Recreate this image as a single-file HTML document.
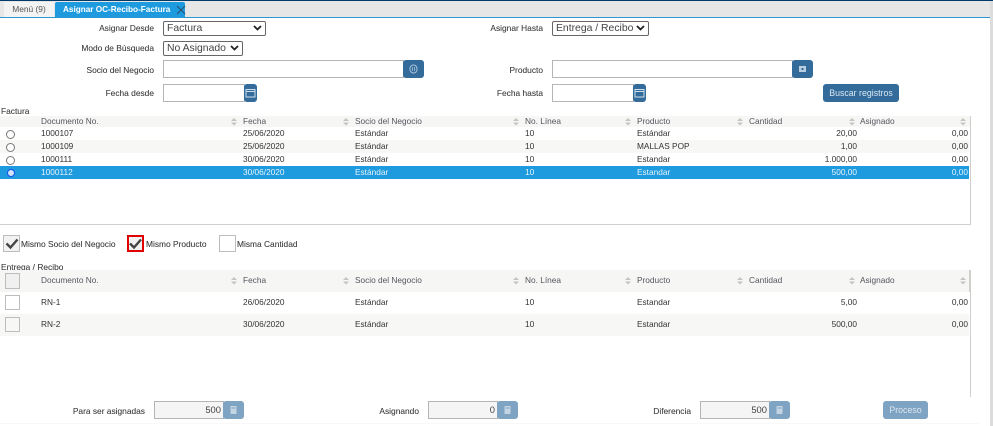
<!DOCTYPE html>
<html lang="es"><head><meta charset="utf-8"><title>Asignar OC-Recibo-Factura</title>
<style>
html,body{margin:0;padding:0;background:#fff}
body{width:993px;height:426px;position:relative;overflow:hidden;font-family:"Liberation Sans",sans-serif;color:#333}
div,span{position:absolute;box-sizing:border-box;white-space:nowrap}
svg{position:absolute;display:block}
.l{font-size:8.4px;line-height:12px;height:12px;text-align:right;color:#444;text-shadow:0 0 .3px #777}
.t{font-size:8.3px;line-height:12px;height:12px;color:#333}
.h{color:#55555f}
.r{text-align:right}
.w{color:#e6f3fb}
.sel{border:1px solid #666;border-radius:2px;background:#fff;font-size:10.4px;line-height:13px;padding-left:3px;color:#444}
.inp{border:1px solid #b5b5b5;background:#fff}
.btn{background:#336b9b;border-radius:3px}
.ro{background:#f5f5f5;border:1px solid #b5b5b5;font-size:9.4px;line-height:16px;text-align:right;padding-right:2px;color:#444}
.bl{background:#7fa3c2;border-radius:3px}
.cb{border:1px solid #bdbdbd;background:#fff}
.radio{width:9px;height:9px;border:1px solid #777;border-radius:50%;background:#fff;left:6px}
</style></head><body>

<div style="left:0;top:0;width:993px;height:1px;background:#003a66"></div>
<div style="left:0;top:1px;width:990px;height:16px;background:#e6e6e6"></div>
<div style="left:0;top:17px;width:990px;height:1px;background:#2d97d2"></div>
<div style="left:990px;top:1px;width:3px;height:425px;background:#dcdcdc"></div>

<div style="left:4px;top:2px;width:50px;height:15px;background:#f3f3f3;font-size:8.4px;line-height:15px;text-align:center;color:#555">Menú (9)</div>
<div style="left:55px;top:2px;width:130px;height:15px;background:#1e9bde;border-radius:2px 2px 0 0;font-size:8.2px;line-height:15px;padding-left:8px;color:#fff;font-weight:bold">Asignar OC-Recibo-Factura</div>
<svg style="left:176px;top:5px" width="10" height="10" viewBox="0 0 10 10"><path d="M1 1L9 9M9 1L1 9" stroke="#2b4f6c" stroke-width="1" fill="none"/></svg>

<div class="l" style="left:40px;top:22px;width:114px">Asignar Desde</div>
<div class="sel" style="left:163px;top:21px;width:103px;height:15px">Factura<svg style="left:89px;top:3px" width="9" height="6" viewBox="0 0 9 6"><path d="M1 1L4.5 4.5L8 1" stroke="#222" stroke-width="1.8" fill="none"/></svg></div>
<div class="l" style="left:40px;top:42px;width:114px">Modo de Búsqueda</div>
<div class="sel" style="left:163px;top:41px;width:80px;height:15px">No Asignado<svg style="left:66px;top:3px" width="9" height="6" viewBox="0 0 9 6"><path d="M1 1L4.5 4.5L8 1" stroke="#222" stroke-width="1.8" fill="none"/></svg></div>
<div class="l" style="left:40px;top:64px;width:114px">Socio del Negocio</div>
<div class="inp" style="left:163px;top:60px;width:241px;height:18px"></div>
<div class="btn" style="left:403px;top:60px;width:21px;height:18px"><svg style="left:6px;top:4px" width="9" height="10" viewBox="0 0 9 10"><rect x="1" y="1" width="7" height="8" rx="3.5" fill="none" stroke="#a9c3d8"/><path d="M3.500 3v4M5.500 3v4" stroke="#a9c3d8" stroke-width=".8"/></svg></div>
<div class="l" style="left:40px;top:87px;width:114px">Fecha desde</div>
<div class="inp" style="left:163px;top:84px;width:82px;height:18px"></div>
<div class="btn" style="left:244px;top:84px;width:13px;height:18px"><svg style="left:1px;top:4px" width="11" height="10" viewBox="0 0 11 10"><rect x="1" y="1.500" width="9" height="7.500" fill="none" stroke="#cfe0ec"/><path d="M1 3.500h9" stroke="#cfe0ec"/></svg></div>

<div class="l" style="left:440px;top:22px;width:103px">Asignar Hasta</div>
<div class="sel" style="left:552px;top:21px;width:97px;height:15px">Entrega / Recibo<svg style="left:83px;top:3px" width="9" height="6" viewBox="0 0 9 6"><path d="M1 1L4.5 4.5L8 1" stroke="#222" stroke-width="1.8" fill="none"/></svg></div>
<div class="l" style="left:440px;top:64px;width:103px">Producto</div>
<div class="inp" style="left:552px;top:60px;width:241px;height:18px"></div>
<div class="btn" style="left:792px;top:60px;width:21px;height:18px"><svg style="left:6px;top:4px" width="9" height="10" viewBox="0 0 9 10"><rect x="1" y="2" width="7" height="6" fill="#b9cfe0"/><rect x="3.500" y="4" width="2" height="2" fill="#336b9b"/></svg></div>
<div class="l" style="left:440px;top:87px;width:103px">Fecha hasta</div>
<div class="inp" style="left:552px;top:84px;width:82px;height:18px"></div>
<div class="btn" style="left:633px;top:84px;width:13px;height:18px"><svg style="left:1px;top:4px" width="11" height="10" viewBox="0 0 11 10"><rect x="1" y="1.500" width="9" height="7.500" fill="none" stroke="#cfe0ec"/><path d="M1 3.500h9" stroke="#cfe0ec"/></svg></div>
<div style="left:823px;top:84px;width:76px;height:18px;background:#336b9b;border-radius:3px;color:#dbe9f3;font-size:8.8px;line-height:18px;text-align:center">Buscar registros</div>

<!-- Tabla Factura -->
<div class="l" style="left:1px;top:105px;text-align:left">Factura</div>
<div style="left:0;top:116px;width:970px;height:11px;background:#f6f6f5"></div>
<div style="left:0;top:140px;width:969px;height:13px;background:#f7f7f5"></div>
<div style="left:0;top:166px;width:969px;height:13px;background:#1e9bde"></div>
<div style="left:970px;top:116px;width:1px;height:109px;background:#cfcfcb"></div>
<div style="left:0;top:224px;width:971px;height:1px;background:#cfcfcb"></div>

<span class="t h" style="left:41px;top:115px">Documento No.</span><span class="t h" style="left:243px;top:115px">Fecha</span><span class="t h" style="left:355px;top:115px">Socio del Negocio</span><span class="t h" style="left:525px;top:115px">No. Línea</span><span class="t h" style="left:637px;top:115px">Producto</span><span class="t h" style="left:749px;top:115px">Cantidad</span><span class="t h" style="left:860px;top:115px">Asignado</span>
<svg style="left:0;top:116px" width="970" height="11"><g fill="#c4c4c0"><path d="M231 5l3-3 3 3zM231 6.500l3 3 3-3zM343 5l3-3 3 3zM343 6.500l3 3 3-3zM513 5l3-3 3 3zM513 6.500l3 3 3-3zM625 5l3-3 3 3zM625 6.500l3 3 3-3zM737 5l3-3 3 3zM737 6.500l3 3 3-3zM849 5l3-3 3 3zM849 6.500l3 3 3-3zM960 5l3-3 3 3zM960 6.500l3 3 3-3z"/></g></svg>

<div class="radio" style="top:130px"></div><div class="radio" style="top:143px"></div><div class="radio" style="top:156px"></div><div class="radio" style="top:169px;width:8px;height:8px;left:6.500px;border-color:#1550e8;background:#cfe4fa"></div>

<span class="t" style="left:41px;top:127px">1000107</span><span class="t" style="left:243px;top:127px">25/06/2020</span><span class="t" style="left:355px;top:127px">Estándar</span><span class="t" style="left:525px;top:127px">10</span><span class="t" style="left:637px;top:127px">Estándar</span><span class="t r" style="left:780px;width:77px;top:127px">20,00</span><span class="t r" style="left:900px;width:68px;top:127px">0,00</span>
<span class="t" style="left:41px;top:140px">1000109</span><span class="t" style="left:243px;top:140px">25/06/2020</span><span class="t" style="left:355px;top:140px">Estándar</span><span class="t" style="left:525px;top:140px">10</span><span class="t" style="left:637px;top:140px">MALLAS POP</span><span class="t r" style="left:780px;width:77px;top:140px">1,00</span><span class="t r" style="left:900px;width:68px;top:140px">0,00</span>
<span class="t" style="left:41px;top:153px">1000111</span><span class="t" style="left:243px;top:153px">30/06/2020</span><span class="t" style="left:355px;top:153px">Estándar</span><span class="t" style="left:525px;top:153px">10</span><span class="t" style="left:637px;top:153px">Estandar</span><span class="t r" style="left:780px;width:77px;top:153px">1.000,00</span><span class="t r" style="left:900px;width:68px;top:153px">0,00</span>
<span class="t w" style="left:41px;top:166px">1000112</span><span class="t w" style="left:243px;top:166px">30/06/2020</span><span class="t w" style="left:355px;top:166px">Estándar</span><span class="t w" style="left:525px;top:166px">10</span><span class="t w" style="left:637px;top:166px">Estandar</span><span class="t r w" style="left:780px;width:77px;top:166px">500,00</span><span class="t r w" style="left:900px;width:68px;top:166px">0,00</span>

<!-- Checks -->
<div class="cb" style="left:3px;top:235px;width:17px;height:17px;background:#f2f2f2"><svg style="left:1px;top:2px" width="14" height="12" viewBox="0 0 14 12"><path d="M1.500 5.500L5.500 9.500L12.500 1.500" stroke="#444" stroke-width="2.400" fill="none"/></svg></div>
<div class="l" style="left:21px;top:238px;text-align:left">Mismo Socio del Negocio</div>
<div style="left:127px;top:235px;width:17px;height:17px;border:2px solid #e00000;background:#f2f2f2"><svg style="left:0;top:1px" width="13" height="12" viewBox="0 0 13 12"><path d="M1 5.500L5 9.500L12 1.500" stroke="#444" stroke-width="2.400" fill="none"/></svg></div>
<div class="l" style="left:146px;top:238px;text-align:left">Mismo Producto</div>
<div class="cb" style="left:219px;top:235px;width:17px;height:17px"></div>
<div class="l" style="left:237px;top:238px;text-align:left">Misma Cantidad</div>

<!-- Tabla Entrega -->
<div class="l" style="left:1px;top:261px;text-align:left">Entrega / Recibo</div>
<div style="left:0;top:270px;width:970px;height:22px;background:#f6f6f5"></div>
<div style="left:0;top:314px;width:969px;height:22px;background:#f7f7f5"></div>
<div style="left:969px;top:270px;width:1px;height:22px;background:#d0d0cc"></div>
<div style="left:970px;top:270px;width:1px;height:127px;background:#cfcfcb"></div>

<div class="cb" style="left:5px;top:273px;width:15px;height:16px;background:#f0f0f0"></div>
<div class="cb" style="left:5px;top:295px;width:15px;height:15px"></div>
<div class="cb" style="left:5px;top:317px;width:15px;height:15px;background:#f7f7f5"></div>

<span class="t h" style="left:41px;top:274px">Documento No.</span><span class="t h" style="left:243px;top:274px">Fecha</span><span class="t h" style="left:355px;top:274px">Socio del Negocio</span><span class="t h" style="left:525px;top:274px">No. Línea</span><span class="t h" style="left:637px;top:274px">Producto</span><span class="t h" style="left:749px;top:274px">Cantidad</span><span class="t h" style="left:860px;top:274px">Asignado</span>
<svg style="left:0;top:275px" width="970" height="11"><g fill="#c4c4c0"><path d="M231 5l3-3 3 3zM231 6.500l3 3 3-3zM343 5l3-3 3 3zM343 6.500l3 3 3-3zM513 5l3-3 3 3zM513 6.500l3 3 3-3zM625 5l3-3 3 3zM625 6.500l3 3 3-3zM737 5l3-3 3 3zM737 6.500l3 3 3-3zM849 5l3-3 3 3zM849 6.500l3 3 3-3zM960 5l3-3 3 3zM960 6.500l3 3 3-3z"/></g></svg>

<span class="t" style="left:41px;top:296px">RN-1</span><span class="t" style="left:243px;top:296px">26/06/2020</span><span class="t" style="left:355px;top:296px">Estándar</span><span class="t" style="left:525px;top:296px">10</span><span class="t" style="left:637px;top:296px">Estandar</span><span class="t r" style="left:780px;width:77px;top:296px">5,00</span><span class="t r" style="left:900px;width:68px;top:296px">0,00</span>
<span class="t" style="left:41px;top:318px">RN-2</span><span class="t" style="left:243px;top:318px">30/06/2020</span><span class="t" style="left:355px;top:318px">Estándar</span><span class="t" style="left:525px;top:318px">10</span><span class="t" style="left:637px;top:318px">Estandar</span><span class="t r" style="left:780px;width:77px;top:318px">500,00</span><span class="t r" style="left:900px;width:68px;top:318px">0,00</span>

<!-- Pie -->
<div style="left:0;top:423px;width:980px;height:1px;background:#f8f8f8"></div>
<div class="l" style="left:40px;top:405px;width:105px">Para ser asignadas</div>
<div class="ro" style="left:154px;top:401px;width:70px;height:18px">500</div>
<div class="bl" style="left:223px;top:401px;width:21px;height:18px"><svg style="left:6px;top:4px" width="9" height="10" viewBox="0 0 9 10"><rect x="1.500" y="1" width="6" height="8" fill="#c3d4e2"/><path d="M2.500 3h4" stroke="#7fa3c2"/></svg></div>
<div class="l" style="left:340px;top:405px;width:79px">Asignando</div>
<div class="ro" style="left:428px;top:401px;width:70px;height:18px">0</div>
<div class="bl" style="left:497px;top:401px;width:21px;height:18px"><svg style="left:6px;top:4px" width="9" height="10" viewBox="0 0 9 10"><rect x="1.500" y="1" width="6" height="8" fill="#c3d4e2"/><path d="M2.500 3h4" stroke="#7fa3c2"/></svg></div>
<div class="l" style="left:620px;top:405px;width:71px">Diferencia</div>
<div class="ro" style="left:700px;top:401px;width:70px;height:18px">500</div>
<div class="bl" style="left:769px;top:401px;width:21px;height:18px"><svg style="left:6px;top:4px" width="9" height="10" viewBox="0 0 9 10"><rect x="1.500" y="1" width="6" height="8" fill="#c3d4e2"/><path d="M2.500 3h4" stroke="#7fa3c2"/></svg></div>
<div style="left:883px;top:401px;width:45px;height:18px;background:#7fa3c2;border-radius:3px;color:#dbe6ef;font-size:8.8px;line-height:18px;text-align:center">Proceso</div>
</body></html>
